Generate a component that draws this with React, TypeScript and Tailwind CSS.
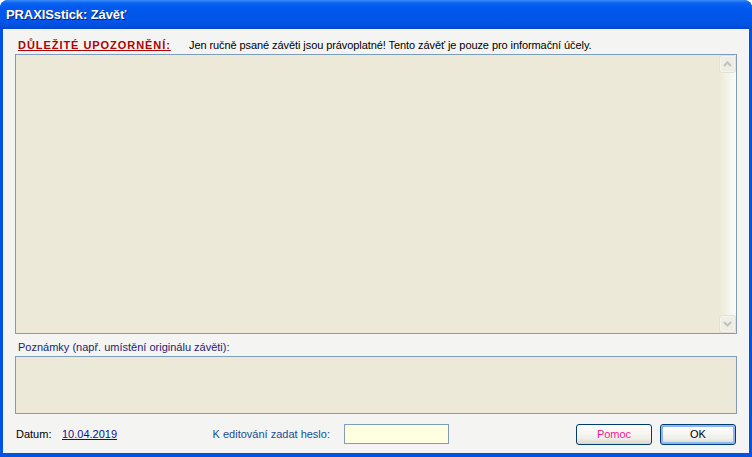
import React from "react";

function ScrollButton({ up }: { up: boolean }) {
  return (
    <div className="w-[15px] h-[16px] mx-auto rounded-[2px] border border-[#f4f3ee] bg-[#eeede6] shadow-[0_0_0_1px_#e3e1d6] flex items-center justify-center">
      <svg width="9" height="6" viewBox="0 0 9 6">
        {up ? (
          <path d="M1 5 L4.5 1.5 L8 5" stroke="#c3c2b8" strokeWidth="2" fill="none" />
        ) : (
          <path d="M1 1 L4.5 4.5 L8 1" stroke="#c3c2b8" strokeWidth="2" fill="none" />
        )}
      </svg>
    </div>
  );
}

export default function App() {
  return (
    <div
      className="w-[752px] h-[457px] flex flex-col rounded-t-[8px] bg-[#0054e3] overflow-hidden"
      style={{ fontFamily: '"Liberation Sans", Arial, sans-serif' }}
    >
      {/* Title bar */}
      <div className="h-[29px] shrink-0 flex items-center pl-[6px] bg-[linear-gradient(180deg,#3c8cf8_0px,#0a63f0_3px,#0058ee_8px,#0055e8_20px,#0050e0_26px,#0046c8_29px)]">
        <span className="text-white font-bold text-[13px] tracking-[-0.1px] [text-shadow:1px_1px_0_#0a1e78]">
          PRAXISstick: Závěť
        </span>
      </div>
      {/* Client area */}
      <div className="flex-1 mx-[3px] mb-[4px] bg-[#f4f4f2] px-[12px] flex flex-col text-[11px] leading-[13px]">
        <div className="h-[25px] shrink-0 flex items-center pt-[7px]">
          <span className="ml-[3px] font-bold underline text-[#b00000] tracking-[0.95px] w-[171px]">
            DŮLEŽITÉ UPOZORNĚNÍ:
          </span>
          <span className="text-black tracking-[-0.08px]">
            Jen ručně psané závěti jsou právoplatné! Tento závěť je pouze pro informační účely.
          </span>
        </div>
        <div className="h-[280px] shrink-0 border border-[#7f9db9] bg-[#ece9d8] flex justify-end">
          <div className="w-[17px] h-full flex flex-col justify-between py-[1px] bg-[linear-gradient(90deg,#ece9d8,#fbfbf9)]">
            <ScrollButton up={true} />
            <ScrollButton up={false} />
          </div>
        </div>
        <div className="h-[22px] shrink-0 flex items-center pt-[4px]">
          <span className="ml-[3px] text-[#1e1e74]">Poznámky (např. umístění originálu závěti):</span>
        </div>
        <div className="h-[58px] shrink-0 border border-[#7f9db9] bg-[#ece9d8]" />
        <div className="flex-1 flex items-center pt-[1px] pr-[1px]">
          <span className="pl-[1px] w-[47px] text-black">Datum:</span>
          <span className="w-[120px] text-[#10108a] underline">10.04.2019</span>
          <span className="w-[148px] text-right text-[#1a4c98]">K editování zadat heslo:</span>
          <div className="ml-[14px] w-[105px] h-[20px] border border-[#7f9db9] bg-[#ffffe1]" />
          <div className="flex-1" />
          <button className="w-[76px] h-[21px] rounded-[3px] border border-[#003c74] bg-[linear-gradient(180deg,#ffffff,#f0f0ea_70%,#d8d6cc)] text-[#ff1493] text-[11px]">
            Pomoc
          </button>
          <button className="ml-[8px] w-[76px] h-[21px] rounded-[3px] border border-[#003c74] bg-[linear-gradient(180deg,#ffffff,#f0f0ea_70%,#d8d6cc)] shadow-[inset_0_0_0_2px_#8fb6ee] text-black text-[11px]">
            OK
          </button>
        </div>
      </div>
    </div>
  );
}
